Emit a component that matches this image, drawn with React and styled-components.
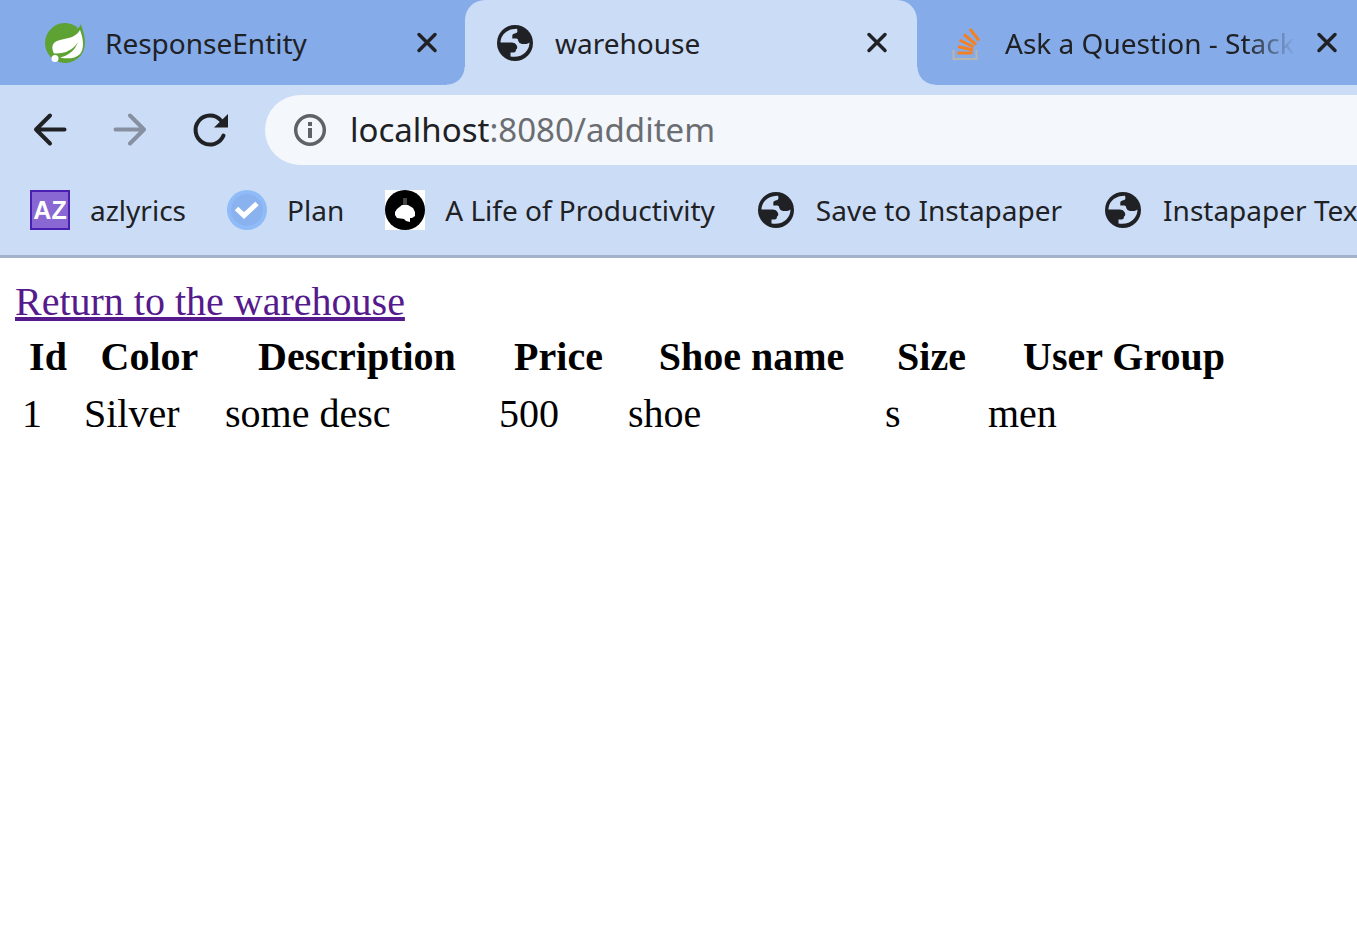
import React from "react";
import styled, { createGlobalStyle, css } from "styled-components";

const strip = "#85ace9";
const chrome = "#cbdcf6";
const ink = "#202124";

const GlobalStyle = createGlobalStyle`
  * { box-sizing: border-box; }
  body { margin: 0; background: #fff; }
`;

const Browser = styled.div`
  min-height: 100vh;
  overflow: hidden;
  color: ${ink};
  font-family: "Noto Sans", "Open Sans", sans-serif;
`;

const TabStrip = styled.div`
  display: flex;
  height: 85px;
  padding-left: 15px;
  overflow: hidden;
  background: ${strip};
`;

const activeShape = css`
  z-index: 0;
  &::before {
    content: "";
    position: absolute;
    z-index: -1;
    inset: 0 -2px 0 0;
    border-radius: 20px 20px 0 0;
    background: ${chrome};
  }
  &::after {
    content: "";
    position: absolute;
    z-index: -1;
    left: -18px;
    right: -20px;
    bottom: 0;
    height: 18px;
    background:
      radial-gradient(circle at 0 0, transparent 17px, ${chrome} 18px) left / 18px 18px no-repeat,
      radial-gradient(circle at 100% 0, transparent 17px, ${chrome} 18px) right / 18px 18px no-repeat;
  }
`;

const Tab = styled.div`
  position: relative;
  flex: 0 0 450px;
  min-width: 0;
  display: flex;
  align-items: center;
  padding: 0 18px 0 30px;
  ${(p) => p.$active && activeShape}
`;

const TabTitle = styled.span`
  flex: 1;
  min-width: 0;
  margin: 0 12px 0 20px;
  overflow: hidden;
  font-size: 28px;
  line-height: 40px;
  white-space: nowrap;
  ${(p) => p.$fade && css`mask-image: linear-gradient(to left, transparent, #000 50px);`}
`;

const IconButton = styled.button`
  display: grid;
  place-items: center;
  flex: none;
  width: 40px;
  height: 40px;
  padding: 0;
  border: 0;
  background: none;
  color: inherit;
  opacity: ${(p) => (p.disabled ? 0.4 : 1)};
`;

const Toolbar = styled.div`
  display: flex;
  align-items: center;
  gap: 40px;
  height: 90px;
  padding-left: 30px;
  background: ${chrome};
`;

const AddressBar = styled.div`
  flex: 1;
  display: flex;
  align-items: center;
  gap: 20px;
  height: 70px;
  margin-left: -5px;
  padding-left: 25px;
  border-radius: 35px 0 0 35px;
  background: #f4f7fc;
  font-size: 33px;
  line-height: 48px;
  white-space: nowrap;
`;

const Address = styled.a`
  color: #6a6d71;
  text-decoration: none;
`;

const Host = styled.span`
  color: ${ink};
`;

const Bookmarks = styled.nav`
  display: flex;
  gap: 41px;
  height: 83px;
  padding: 15px 0 0 30px;
  overflow: hidden;
  border-bottom: 3px solid #a3b1cb;
  background: ${chrome};
`;

const Bookmark = styled.a`
  flex: none;
  display: flex;
  align-items: center;
  gap: 20px;
  height: 40px;
  color: inherit;
  font-size: 28px;
  line-height: 40px;
  text-decoration: none;
  white-space: nowrap;
`;

const AzTile = styled.span`
  display: grid;
  place-items: center;
  width: 40px;
  height: 40px;
  border: 2px solid #4a20b4;
  background: #8a68d4;
  color: #fff;
  font: bold 25px/36px "Liberation Sans", sans-serif;
`;

const Page = styled.main`
  padding: 20px 15px;
  color: #000;
  font-family: "Liberation Serif", serif;
  font-size: 40px;
  line-height: 47px;
`;

const ReturnLink = styled.a`
  color: #551a8b;
`;

const Items = styled.table`
  table-layout: fixed;
  width: 1252px;
  margin-top: 1px;
  border-spacing: 4px;
  th, td { padding: 3px; white-space: nowrap; }
  td { text-align: left; }
`;

const Column = styled.col`
  width: ${(p) => p.$width}px;
`;

const Icon = ({ size = 40, children }) => (
  <svg width={size} height={size} viewBox={`0 0 ${size} ${size}`} fill="none" aria-hidden="true">
    {children}
  </svg>
);

const Globe = () => (
  <Icon>
    <circle cx="20" cy="20" r="18" fill={ink} />
    <path
      fill={chrome}
      d="M5.500 18.500C6.500 10.500 13 5.800 22 5.800Q22.600 7 22.300 9Q21.800 10.400 19.500 10.400Q17.300 10.800 17.300 12.500V15.500H21.500Q23.300 15.600 23.300 18Q24 20.800 27 21H31Q33 20.600 34.500 19.500C34.500 28 27 35.500 15.500 33.500V29.500H18.500Q21 29.300 21 26.500Q23 25.500 21.800 22.500Q20.500 19.800 17 19.600H5.500Z"
    />
  </Icon>
);

const Spring = () => (
  <Icon>
    <path fill="#5fa234" d="M32 6C34 4.500 35 3 36 1C37 5 40 12 40 20A20 20 0 1 1 32 4Z" />
    <path
      fill="#fff"
      d="M35 7C39 17 39 26 35 31C30 36 22 36 15 34.500C25 32 30 27 33 19C28 27 20 31 9 30.500C6 25 7 20 12 18C20 15 30 16 35 7Z"
    />
    <circle cx="10" cy="35.500" r="3.500" fill="#fff" />
  </Icon>
);

const StackOverflow = () => (
  <Icon>
    <path stroke="#b9b5ae" strokeWidth="2" d="M8.500 27V36H31.500V27" />
    <path
      stroke="#f48024"
      strokeWidth="3"
      d="M12.500 30H27.500M13 23.500L28 27M14.500 17L28.500 24M19 11.500L31 21.500M25 6L34 17.500"
    />
  </Icon>
);

const Check = () => (
  <Icon>
    <circle cx="20" cy="20" r="20" fill="#8fbcf8" />
    <circle cx="20" cy="20" r="16" fill="#8ab2ee" />
    <path stroke="#fff" strokeWidth="5" d="M9.500 18.500L17 25.500L30 13.500" />
  </Icon>
);

const Productivity = () => (
  <Icon>
    <path fill="#fff" d="M0 0H40V40H0Z" />
    <circle cx="20" cy="20" r="20" fill="#000" />
    <path stroke="#444" strokeWidth="4" d="M20 8V15" />
    <path
      fill="#fff"
      d="M17 15H23L28 18L30 22V26L27 28H25V32L21 31L19 29L12 28L10 25V22L12 19Z"
    />
  </Icon>
);

const Close = () => (
  <Icon size={24}>
    <path stroke={ink} strokeWidth="3.500" strokeLinecap="round" d="M4 3.500L20 19.500M20 3.500L4 19.500" />
  </Icon>
);

const Back = () => (
  <Icon>
    <path stroke={ink} strokeWidth="4" strokeLinecap="round" strokeLinejoin="round" d="M34.500 19.500H6M20 5.500L6 19.500L20 33.500" />
  </Icon>
);

const Forward = () => (
  <Icon>
    <path stroke={ink} strokeWidth="4" strokeLinecap="round" strokeLinejoin="round" d="M5.500 19.500H34M20 5.500L34 19.500L20 33.500" />
  </Icon>
);

const Reload = () => (
  <Icon>
    <path stroke={ink} strokeWidth="4" strokeLinecap="round" d="M33.500 25.500A14.500 14.500 0 1 1 31 10.500" />
    <path fill={ink} d="M38 4V17.500H24Z" />
  </Icon>
);

const Info = () => (
  <Icon>
    <circle cx="20" cy="20" r="14.300" stroke="#5f6368" strokeWidth="3.500" />
    <path stroke="#5f6368" strokeWidth="4" d="M20 12V16M20 18V28" />
  </Icon>
);

const tabs = [
  { title: "ResponseEntity", icon: <Spring /> },
  { title: "warehouse", icon: <Globe />, active: true },
  { title: "Ask a Question - Stack", icon: <StackOverflow />, fade: true },
];

const bookmarks = [
  { label: "azlyrics", icon: <AzTile aria-hidden="true">AZ</AzTile> },
  { label: "Plan", icon: <Check /> },
  { label: "A Life of Productivity", icon: <Productivity /> },
  { label: "Save to Instapaper", icon: <Globe /> },
  { label: "Instapaper Text", icon: <Globe /> },
];

const columns = [
  { name: "Id", width: 58 },
  { name: "Color", width: 137 },
  { name: "Description", width: 270 },
  { name: "Price", width: 125 },
  { name: "Shoe name", width: 253 },
  { name: "Size", width: 99 },
  { name: "User Group", width: 278 },
];

const rows = [["1", "Silver", "some desc", "500", "shoe", "s", "men"]];

export default function App() {
  return (
    <>
      <GlobalStyle />
      <Browser>
        <TabStrip>
          {tabs.map((t) => (
            <Tab key={t.title} $active={t.active}>
              {t.icon}
              <TabTitle $fade={t.fade}>{t.title}</TabTitle>
              <IconButton aria-label={`Close ${t.title}`}>
                <Close />
              </IconButton>
            </Tab>
          ))}
        </TabStrip>
        <Toolbar>
          <IconButton aria-label="Back"><Back /></IconButton>
          <IconButton aria-label="Forward" disabled><Forward /></IconButton>
          <IconButton aria-label="Reload"><Reload /></IconButton>
          <AddressBar>
            <Info />
            <Address href="#additem"><Host>localhost</Host>:8080/additem</Address>
          </AddressBar>
        </Toolbar>
        <Bookmarks aria-label="Bookmarks">
          {bookmarks.map((b) => (
            <Bookmark key={b.label} href="#bookmark">
              {b.icon}
              {b.label}
            </Bookmark>
          ))}
        </Bookmarks>
        <Page>
          <ReturnLink href="#warehouse">Return to the warehouse</ReturnLink>
          <Items>
            <colgroup>
              {columns.map((c) => <Column key={c.name} $width={c.width} />)}
            </colgroup>
            <thead>
              <tr>{columns.map((c) => <th key={c.name} scope="col">{c.name}</th>)}</tr>
            </thead>
            <tbody>
              {rows.map((r) => (
                <tr key={r[0]}>{r.map((v, i) => <td key={columns[i].name}>{v}</td>)}</tr>
              ))}
            </tbody>
          </Items>
        </Page>
      </Browser>
    </>
  );
}
